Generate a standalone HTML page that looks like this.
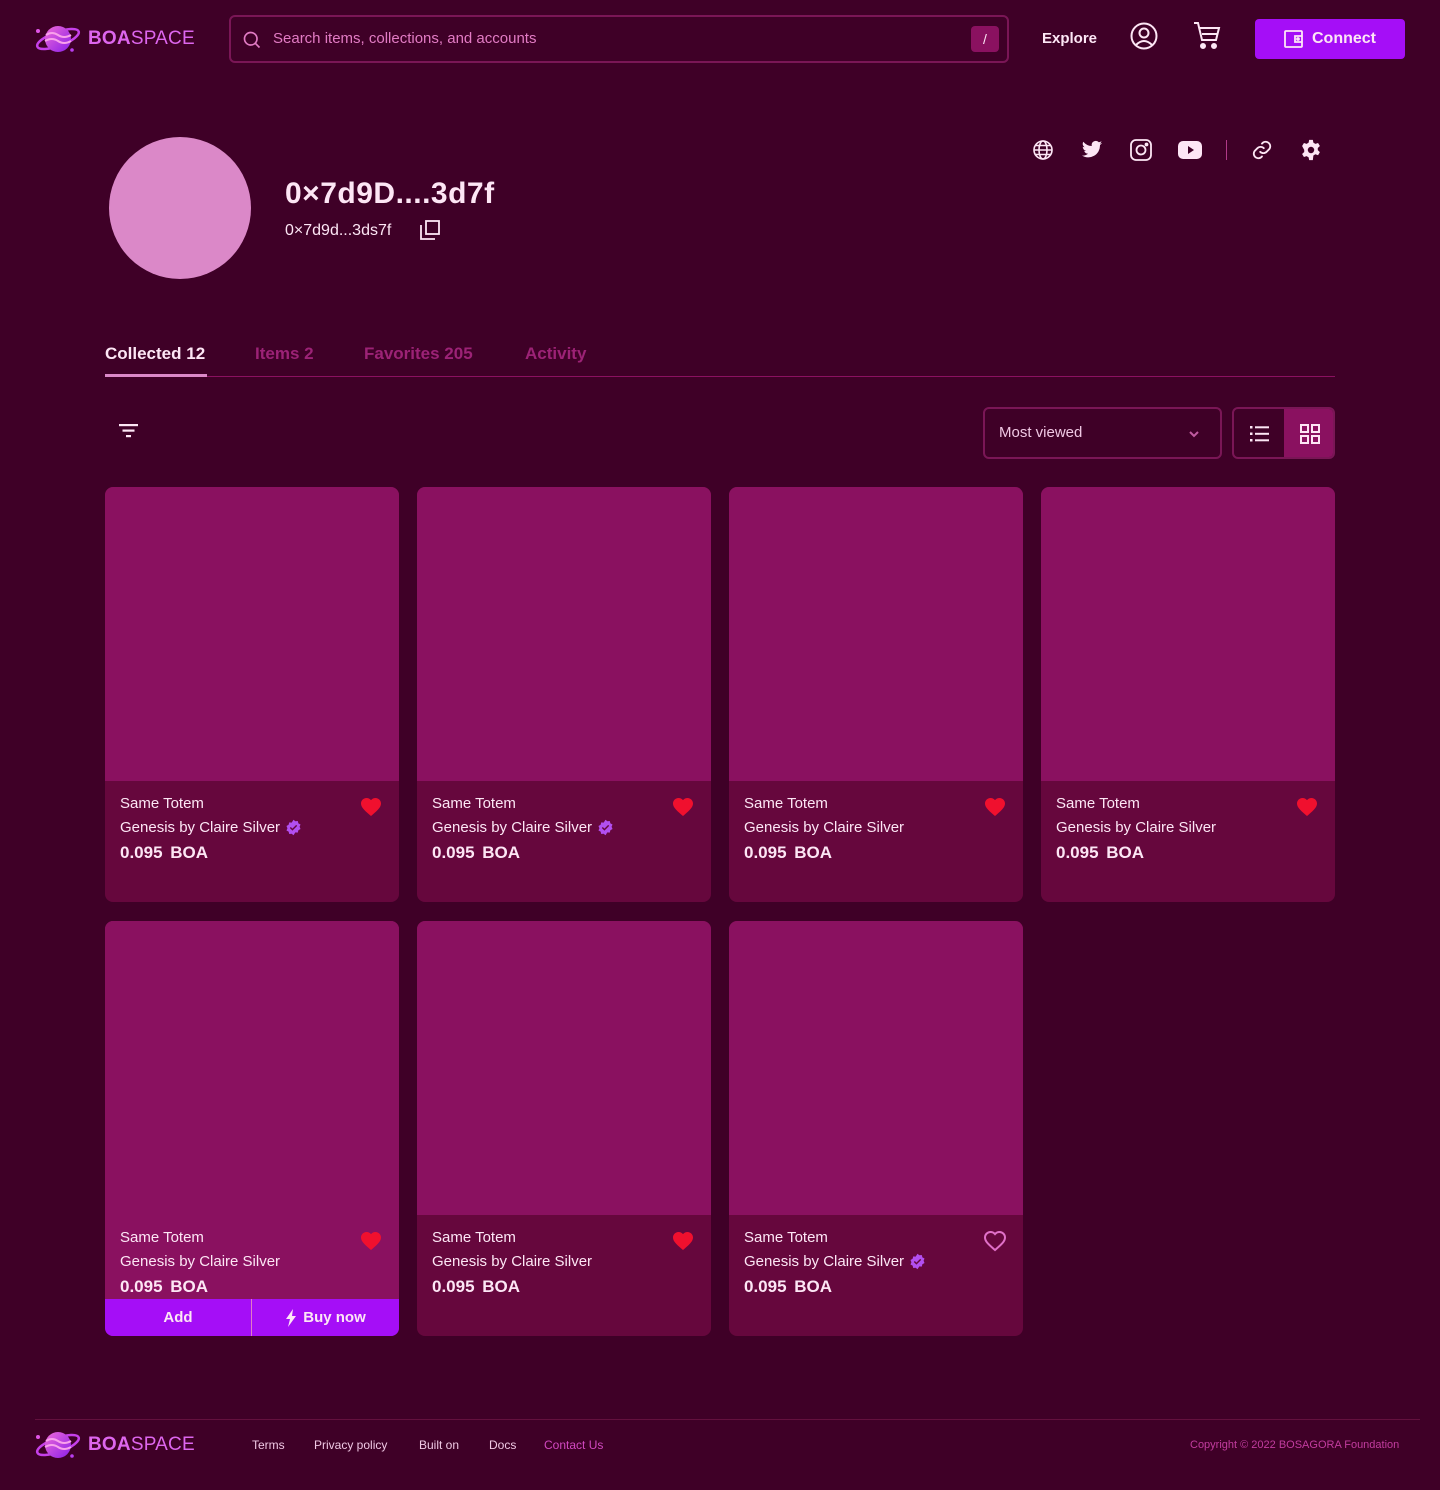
<!DOCTYPE html>
<html><head><meta charset="utf-8">
<style>
*{box-sizing:border-box;margin:0;padding:0}
body{width:1440px;height:1490px;background:#3f0027;font-family:"Liberation Sans",sans-serif;color:#fde6f5;position:relative;overflow:hidden}
.abs{position:absolute}
.logo{display:flex;align-items:center;gap:6px}
.logo b{font-size:19px;color:#dd66ee;letter-spacing:0.2px}
.logo b span{font-weight:normal}
.search{left:229px;top:15px;width:780px;height:48px;border:2px solid #7a1656;border-radius:6px}
.search .ph{position:absolute;left:42px;top:13px;font-size:15px;color:#e27bc4}
.slash{position:absolute;right:8px;top:9px;width:28px;height:26px;background:#8a1160;border-radius:4px;text-align:center;line-height:26px;font-size:14px}
.btn{left:1255px;top:19px;width:150px;height:40px;background:#a50ef7;border-radius:4px;display:flex;align-items:center;justify-content:center;gap:8px;font-size:16px;font-weight:bold;color:#fde6f5}
.tab{top:344px;font-size:17px;font-weight:bold;color:#9c2276}
.card{position:absolute;width:294px;height:415px;border-radius:8px;overflow:hidden;background:#66073d}
.card .img{height:294px;background:#8a1160}
.card .t1{position:absolute;left:15px;top:308px;font-size:15px}
.card .t2{position:absolute;left:15px;top:332px;font-size:15px;display:flex;align-items:center;gap:5px}
.card .t3{position:absolute;left:15px;top:356px;font-size:17px;font-weight:bold;word-spacing:3px}
.card .hrt{position:absolute;right:16px;top:308px}
.foot a{position:absolute;top:1438px;font-size:12px;color:#f0c8e4;text-decoration:none}
</style></head><body>

<svg width="0" height="0" style="position:absolute"><defs>
<linearGradient id="pg" x1="0" y1="0" x2="1" y2="1"><stop offset="0" stop-color="#f06ad8"/><stop offset="1" stop-color="#8a1ee8"/></linearGradient>
<symbol id="planet" viewBox="0 0 48 34"><circle cx="4" cy="9" r="2" fill="#e055e6"/><circle cx="38" cy="28" r="1.8" fill="#b93ef0"/><ellipse cx="24" cy="17" rx="22" ry="7" fill="none" stroke="#c640ea" stroke-width="2.5" transform="rotate(-20 24 17)"/><circle cx="24" cy="17" r="13" fill="url(#pg)"/><path d="M12 13q6-4 12 0t13 0M11 19q7-4 13 0t13 0" stroke="#f9a0ec" stroke-width="2" fill="none"/></symbol>
<symbol id="heart" viewBox="0 0 24 24"><path d="M12 21l-1.5-1.3C5 15 2 12 2 8.5 2 5.5 4.4 3 7.5 3c1.7 0 3.4.8 4.5 2.1C13.1 3.8 14.8 3 16.5 3 19.6 3 22 5.5 22 8.5c0 3.5-3 6.5-8.5 11.2z"/></symbol>
<symbol id="badge" viewBox="0 0 24 24"><path d="M12 1l2.6 2.2 3.4-.4.9 3.3 3 1.7-1.3 3.2 1.3 3.2-3 1.7-.9 3.3-3.4-.4L12 23l-2.6-2.2-3.4.4-.9-3.3-3-1.7L3.4 13 2.1 9.8l3-1.7.9-3.3 3.4.4z" fill="#b24ff0"/><path d="M7.5 12l3 3 6-6" stroke="#66073d" stroke-width="2" fill="none"/></symbol>
</defs></svg>

<!-- header -->
<div class="abs logo" style="left:34px;top:22px"><svg width="48" height="34"><use href="#planet"/></svg><b>BOA<span>SPACE</span></b></div>
<div class="abs search">
<svg class="abs" style="left:11px;top:13px" width="20" height="20" viewBox="0 0 24 24" fill="none" stroke="#e27bc4" stroke-width="2"><circle cx="10.5" cy="10.5" r="7.5"/><path d="M16 16l5 5"/></svg>
<div class="ph">Search items, collections, and accounts</div><div class="slash">/</div></div>
<div class="abs" style="left:1042px;top:30px;font-size:15px;font-weight:bold">Explore</div>
<svg class="abs" style="left:1130px;top:22px" width="28" height="28" viewBox="0 0 28 28" fill="none" stroke="#fde6f5" stroke-width="2"><circle cx="14" cy="14" r="12.5"/><circle cx="14" cy="11" r="4.5"/><path d="M6 23q8-8 16 0"/></svg>
<svg class="abs" style="left:1193px;top:21px" width="28" height="30" viewBox="0 0 28 30" fill="none" stroke="#fde6f5" stroke-width="2"><path d="M1 2h4l4 17h14l3-12H7M9 13h15"/><circle cx="10" cy="25" r="2" fill="#fde6f5"/><circle cx="21" cy="25" r="2" fill="#fde6f5"/></svg>
<div class="abs btn"><svg width="20" height="18" viewBox="0 0 20 18" fill="none" stroke="#fde6f5" stroke-width="1.8"><rect x="1" y="1" width="17" height="16" rx="1"/><path d="M18 6h-7v6h7"/><circle cx="14" cy="9" r="1" fill="#fde6f5"/></svg>Connect</div>

<!-- profile -->
<div class="abs" style="left:109px;top:137px;width:142px;height:142px;border-radius:50%;background:#db88c8"></div>
<div class="abs" style="left:285px;top:177px;font-size:30px;font-weight:bold;letter-spacing:0.5px">0×7d9D....3d7f</div>
<div class="abs" style="left:285px;top:222px;font-size:16px">0×7d9d...3ds7f</div>
<svg class="abs" style="left:420px;top:220px" width="20" height="20" viewBox="0 0 20 20" fill="none" stroke="#fde6f5" stroke-width="1.8"><rect x="6" y="1" width="13" height="13"/><path d="M1 5v14h14"/></svg>

<!-- socials -->
<svg class="abs" style="left:1033px;top:140px" width="20" height="20" viewBox="0 0 20 20" fill="none" stroke="#fde6f5" stroke-width="1.6"><circle cx="10" cy="10" r="9"/><ellipse cx="10" cy="10" rx="4" ry="9"/><path d="M1 10h18M2.5 5.5h15M2.5 14.5h15"/></svg>
<svg class="abs" style="left:1081px;top:140px" width="22" height="20" viewBox="0 0 24 20" fill="#fde6f5"><path d="M23 2.3c-.8.4-1.7.6-2.6.7.9-.6 1.6-1.4 2-2.5-.9.5-1.9.9-2.9 1.1A4.5 4.5 0 0 0 11.8 5.7 12.8 12.8 0 0 1 2.5 1a4.5 4.5 0 0 0 1.4 6 4.4 4.4 0 0 1-2-.6 4.5 4.5 0 0 0 3.6 4.5 4.5 4.5 0 0 1-2 .1 4.5 4.5 0 0 0 4.2 3.1A9 9 0 0 1 1 16a12.8 12.8 0 0 0 19.700-11.4c.9-.6 1.6-1.4 2.3-2.3z"/></svg>
<svg class="abs" style="left:1130px;top:139px" width="22" height="22" viewBox="0 0 22 22" fill="none" stroke="#fde6f5" stroke-width="1.8"><rect x="1" y="1" width="20" height="20" rx="5"/><circle cx="11" cy="11" r="4.5"/><circle cx="16.5" cy="5.5" r="1" fill="#fde6f5"/></svg>
<svg class="abs" style="left:1178px;top:140px" width="24" height="20" viewBox="0 0 24 20"><rect x="0" y="1" width="24" height="18" rx="5" fill="#fde6f5"/><path d="M10 6v8l6-4z" fill="#3f0027"/></svg>
<div class="abs" style="left:1226px;top:140px;width:1px;height:20px;background:#b03a88"></div>
<svg class="abs" style="left:1251px;top:139px" width="22" height="22" viewBox="0 0 24 24" fill="none" stroke="#fde6f5" stroke-width="2" stroke-linecap="round"><path d="M10 14a5 5 0 0 0 7 0l3-3a5 5 0 0 0-7-7l-1 1"/><path d="M14 10a5 5 0 0 0-7 0l-3 3a5 5 0 0 0 7 7l1-1"/></svg>
<svg class="abs" style="left:1300px;top:139px" width="22" height="22" viewBox="0 0 24 24" fill="#fde6f5"><path d="M10 1h4l.6 3 2.2 1.3 2.9-1 2 3.4-2.3 2.1v2.4l2.3 2.1-2 3.4-2.9-1-2.2 1.3L14 23h-4l-.6-3-2.2-1.3-2.9 1-2-3.4 2.3-2.1v-2.4L2.3 7.7l2-3.4 2.9 1L9.4 4z"/><circle cx="12" cy="12" r="3.5" fill="#3f0027"/></svg>

<!-- tabs -->
<div class="abs tab" style="left:105px;color:#fde6f5">Collected 12</div>
<div class="abs tab" style="left:255px">Items 2</div>
<div class="abs tab" style="left:364px">Favorites 205</div>
<div class="abs tab" style="left:525px">Activity</div>
<div class="abs" style="left:105px;top:376px;width:1230px;height:1px;background:#8a1160"></div>
<div class="abs" style="left:105px;top:374px;width:102px;height:3px;background:#db88c8"></div>

<!-- toolbar -->
<svg class="abs" style="left:119px;top:423px" width="20" height="16" viewBox="0 0 20 16" fill="#fde6f5"><rect x="0" y="1" width="19" height="2.2"/><rect x="3.5" y="6.5" width="12" height="2.2"/><rect x="7" y="12" width="5" height="2.2"/></svg>
<div class="abs" style="left:983px;top:407px;width:239px;height:52px;border:2px solid #7a1656;border-radius:6px">
<div class="abs" style="left:14px;top:15px;font-size:15px;color:#f0c8e4">Most viewed</div>
<svg class="abs" style="left:202px;top:18px" width="14" height="14" viewBox="0 0 14 14" fill="none" stroke="#c05aa0" stroke-width="2"><path d="M3 5l4 4 4-4"/></svg></div>
<div class="abs" style="left:1232px;top:407px;width:103px;height:52px;border:2px solid #7a1656;border-radius:6px;overflow:hidden">
<div class="abs" style="left:50px;top:0;width:51px;height:48px;background:#8a1160"></div>
<svg class="abs" style="left:16px;top:16px" width="20" height="18" viewBox="0 0 20 18" fill="#fde6f5"><rect x="0" y="1" width="2.5" height="2.5"/><rect x="0" y="7.5" width="2.5" height="2.5"/><rect x="0" y="14" width="2.5" height="2.5"/><rect x="5" y="1.3" width="14" height="2"/><rect x="5" y="7.8" width="14" height="2"/><rect x="5" y="14.3" width="14" height="2"/></svg>
<svg class="abs" style="left:66px;top:15px" width="20" height="20" viewBox="0 0 20 20" fill="none" stroke="#fde6f5" stroke-width="2"><rect x="1" y="1" width="7" height="7"/><rect x="12" y="1" width="7" height="7"/><rect x="1" y="12" width="7" height="7"/><rect x="12" y="12" width="7" height="7"/></svg></div>

<!-- cards -->
<div class="card" style="left:105px;top:487px"><div class="img"></div><div class="t1">Same Totem</div><div class="t2">Genesis by Claire Silver <svg width="17" height="17"><use href="#badge"/></svg></div><div class="t3">0.095 BOA</div><svg class="hrt" width="24" height="24" fill="#f0102e"><use href="#heart"/></svg></div>
<div class="card" style="left:417px;top:487px"><div class="img"></div><div class="t1">Same Totem</div><div class="t2">Genesis by Claire Silver <svg width="17" height="17"><use href="#badge"/></svg></div><div class="t3">0.095 BOA</div><svg class="hrt" width="24" height="24" fill="#f0102e"><use href="#heart"/></svg></div>
<div class="card" style="left:729px;top:487px"><div class="img"></div><div class="t1">Same Totem</div><div class="t2">Genesis by Claire Silver</div><div class="t3">0.095 BOA</div><svg class="hrt" width="24" height="24" fill="#f0102e"><use href="#heart"/></svg></div>
<div class="card" style="left:1041px;top:487px"><div class="img"></div><div class="t1">Same Totem</div><div class="t2">Genesis by Claire Silver</div><div class="t3">0.095 BOA</div><svg class="hrt" width="24" height="24" fill="#f0102e"><use href="#heart"/></svg></div>

<div class="card" style="left:105px;top:921px;background:#8a1160"><div class="img"></div><div class="t1">Same Totem</div><div class="t2">Genesis by Claire Silver</div><div class="t3">0.095 BOA</div><svg class="hrt" width="24" height="24" fill="#f0102e"><use href="#heart"/></svg>
<div class="abs" style="left:0;top:378px;width:294px;height:37px;background:#a50ef7;display:flex;font-size:15px;font-weight:bold">
<div style="width:147px;text-align:center;line-height:37px;border-right:1px solid #e27bc4">Add</div>
<div style="flex:1;display:flex;align-items:center;justify-content:center;gap:6px"><svg width="12" height="18" viewBox="0 0 12 18" fill="#fde6f5"><path d="M8 0L1 10h4l-2 8 8-11H7z"/></svg>Buy now</div></div></div>
<div class="card" style="left:417px;top:921px"><div class="img"></div><div class="t1">Same Totem</div><div class="t2">Genesis by Claire Silver</div><div class="t3">0.095 BOA</div><svg class="hrt" width="24" height="24" fill="#f0102e"><use href="#heart"/></svg></div>
<div class="card" style="left:729px;top:921px"><div class="img"></div><div class="t1">Same Totem</div><div class="t2">Genesis by Claire Silver <svg width="17" height="17"><use href="#badge"/></svg></div><div class="t3">0.095 BOA</div><svg class="hrt" width="24" height="24" fill="none" stroke="#e070c8" stroke-width="2"><use href="#heart"/></svg></div>

<!-- footer -->
<div class="abs" style="left:35px;top:1419px;width:1385px;height:1px;background:#63103e"></div>
<div class="abs logo" style="left:34px;top:1428px"><svg width="48" height="34"><use href="#planet"/></svg><b>BOA<span>SPACE</span></b></div>
<div class="foot"><a style="left:252px">Terms</a><a style="left:314px">Privacy policy</a><a style="left:419px">Built on</a><a style="left:489px">Docs</a><a style="left:544px;color:#d148c0">Contact Us</a></div>
<div class="abs" style="left:1190px;top:1439px;font-size:11px;color:#c23c9f">Copyright © 2022 BOSAGORA Foundation</div>
</body></html>
